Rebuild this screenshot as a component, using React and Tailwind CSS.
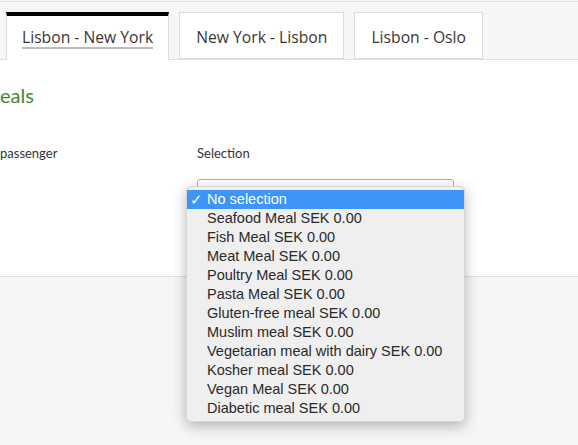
import React from 'react';

const tabs = ['Lisbon - New York', 'New York - Lisbon', 'Lisbon - Oslo'];

const meals = [
  'No selection',
  'Seafood Meal SEK 0.00',
  'Fish Meal SEK 0.00',
  'Meat Meal SEK 0.00',
  'Poultry Meal SEK 0.00',
  'Pasta Meal SEK 0.00',
  'Gluten-free meal SEK 0.00',
  'Muslim meal SEK 0.00',
  'Vegetarian meal with dairy SEK 0.00',
  'Kosher meal SEK 0.00',
  'Vegan Meal SEK 0.00',
  'Diabetic meal SEK 0.00',
];

function MealMenu() {
  return (
    <div className="absolute left-[-12px] top-[6px] w-[279px] rounded-[5px] bg-[#efefef] py-[3px] shadow-[0_4px_14px_rgba(0,0,0,0.28)] border border-[#d6d6d6] font-['Liberation_Sans',sans-serif] text-[14.5px]">
      {meals.map((meal, idx) => (
        <div
          key={meal}
          className={
            idx === 0
              ? 'flex h-[19px] items-center bg-[#3d95f7] text-white'
              : 'flex h-[19px] items-center text-[#2a2a2a]'
          }
        >
          <span className="w-[20px] pl-[3px] text-[15px] leading-none">
            {idx === 0 ? '✓' : ''}
          </span>
          <span className="leading-none">{meal}</span>
        </div>
      ))}
    </div>
  );
}

export default function App() {
  return (
    <div className="h-[445px] w-[578px] overflow-hidden bg-[#f6f6f6] font-['Lato',sans-serif]">
      <div className="mt-[1px] border-t border-[#dedede] border-b bg-[#f6f6f6] pt-[10px] pl-[6px]">
        <div className="flex gap-[10px] -mb-px">
          {tabs.map((tab, idx) => (
            <div
              key={tab}
              className={
                idx === 0
                  ? 'flex h-[48px] items-center border-x border-[#dcdcdc] border-t-[4px] border-t-black bg-white px-[15px] pt-[1px]'
                  : 'flex h-[47px] items-center border border-[#dcdcdc] bg-white px-[16px] pt-[3px]'
              }
            >
              <span
                className={
                  idx === 0
                    ? "font-['Open_Sans',sans-serif] text-[15.7px] text-[#3a3634] border-b-2 border-[#bdbdbd] leading-[19px]"
                    : "font-['Open_Sans',sans-serif] text-[15.7px] text-[#3a3634] leading-[19px]"
                }
              >
                {tab}
              </span>
            </div>
          ))}
        </div>
      </div>

      <div className="h-[217px] bg-white border-b border-[#dedede]">
        <h2 className="pt-[22px] text-[20px] leading-[26px] text-[#3f8a2b]">eals</h2>
        <div className="mt-[36px] flex text-[13px] text-[#333]">
          <div className="w-[197px]">passenger</div>
          <div>Selection</div>
        </div>
        <div className="mt-[15px] flex">
          <div className="w-[197px]" />
          <div className="relative h-[30px] w-[257px] rounded-[3px] border border-[#8fb8ea] bg-white">
            <MealMenu />
          </div>
        </div>
      </div>
    </div>
  );
}
